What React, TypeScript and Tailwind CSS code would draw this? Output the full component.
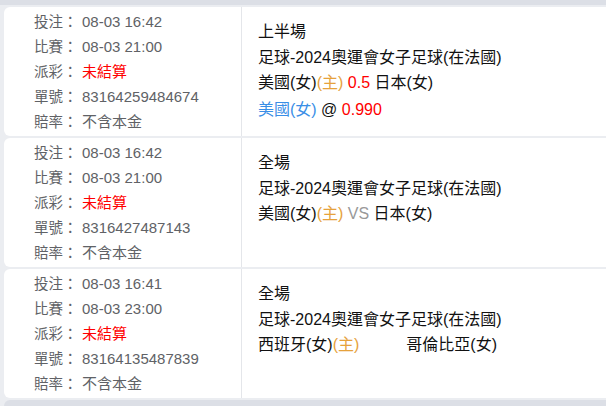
import React from "react";

type Row = { label: string; value: React.ReactNode };

const font = { fontFamily: '"Liberation Sans", "Noto Sans CJK TC", sans-serif' };

function Card({ rows, right }: { rows: Row[]; right: React.ReactNode }) {
  return (
    <div className="flex h-[129px] w-[640px] rounded-[6px] bg-white">
      <div className="w-[238px] shrink-0 border-r border-[#e4e6ea] pl-[30px] pt-[3px]">
        {rows.map((r, i) => (
          <div key={i} className="flex h-[25px] items-center text-[15px] text-[#606266]">
            <span className="w-[48px] shrink-0 text-[14.5px]">{r.label}</span>
            <span>{r.value}</span>
          </div>
        ))}
      </div>
      <div className="pl-[16px] pt-[12px] text-[16px] leading-[25.5px] text-[#111]">{right}</div>
    </div>
  );
}

export default function App() {
  const orange = "text-[#e6a23c]";
  return (
    <div style={font} className="h-[406px] w-[606px] overflow-hidden bg-[#ebedf1]">
      <div className="h-[5px] bg-[#dcdfe6]" />
      <div className="flex flex-col gap-[2px] pl-[4px] pt-[2px]">
        <Card
          rows={[
            { label: "投注：", value: "08-03 16:42" },
            { label: "比賽：", value: "08-03 21:00" },
            { label: "派彩：", value: <span className="text-[#ff0000]">未結算</span> },
            { label: "單號：", value: "83164259484674" },
            { label: "賠率：", value: "不含本金" },
          ]}
          right={
            <>
              <div>上半場</div>
              <div>足球-2024奧運會女子足球(在法國)</div>
              <div>
                美國(女)<span className={orange}>(主)</span>{" "}
                <span className="text-[#ff0000]">0.5</span> 日本(女)
              </div>
              <div className="mt-[1px]">
                <span className="text-[#3a8ee6]">美國(女)</span> @{" "}
                <span className="text-[#ff0000]">0.990</span>
              </div>
            </>
          }
        />
        <Card
          rows={[
            { label: "投注：", value: "08-03 16:42" },
            { label: "比賽：", value: "08-03 21:00" },
            { label: "派彩：", value: <span className="text-[#ff0000]">未結算</span> },
            { label: "單號：", value: "8316427487143" },
            { label: "賠率：", value: "不含本金" },
          ]}
          right={
            <>
              <div>全場</div>
              <div>足球-2024奧運會女子足球(在法國)</div>
              <div>
                美國(女)<span className={orange}>(主)</span>{" "}
                <span className="text-[#999999]">VS</span> 日本(女)
              </div>
            </>
          }
        />
        <Card
          rows={[
            { label: "投注：", value: "08-03 16:41" },
            { label: "比賽：", value: "08-03 23:00" },
            { label: "派彩：", value: <span className="text-[#ff0000]">未結算</span> },
            { label: "單號：", value: "83164135487839" },
            { label: "賠率：", value: "不含本金" },
          ]}
          right={
            <>
              <div>全場</div>
              <div>足球-2024奧運會女子足球(在法國)</div>
              <div className="flex">
                <span>
                  西班牙(女)<span className={orange}>(主)</span>
                </span>
                <span className="ml-[47px]">哥倫比亞(女)</span>
              </div>
            </>
          }
        />
        <div className="h-[10px] rounded-tl-[6px] bg-[#dcdfe6]" />
      </div>
    </div>
  );
}
